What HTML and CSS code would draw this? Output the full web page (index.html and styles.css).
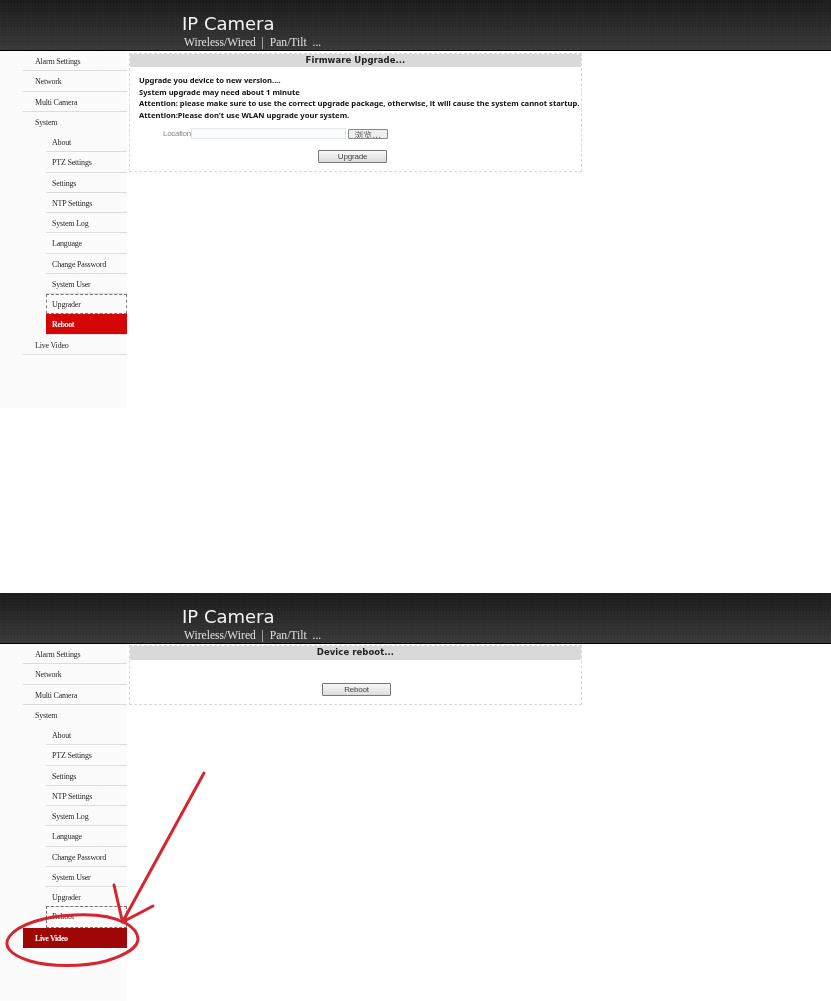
FILE: index.html
```html
<!DOCTYPE html>
<html lang="en">
<head>
<meta charset="utf-8">
<title>IP Camera</title>
<link rel="stylesheet" href="styles.css">
</head>
<body>
<section class="screen screen-first">
  <header class="top">
    <div class="brand">IP Camera</div>
    <div class="tag">Wireless/Wired&nbsp; |&nbsp; Pan/Tilt&nbsp; ...</div>
  </header>
  <div class="content">
    <nav class="side">
      <a class="item">Alarm Settings</a>
      <a class="item">Network</a>
      <a class="item">Multi Camera</a>
      <a class="item plain">System</a>
      <div class="sub">
        <a class="item">About</a>
        <a class="item">PTZ Settings</a>
        <a class="item">Settings</a>
        <a class="item">NTP Settings</a>
        <a class="item">System Log</a>
        <a class="item">Language</a>
        <a class="item">Change Password</a>
        <a class="item">System User</a>
        <a class="item focus">Upgrader</a>
        <a class="item active">Reboot</a>
      </div>
      <a class="item">Live Video</a>
    </nav>
    <main class="panel panel-upgrade">
      <h2 class="panel-title">Firmware Upgrade...</h2>
      <div class="notes">
        <p>Upgrade you device to new version....</p>
        <p>System upgrade may need about 1 minute</p>
        <p>Attention: please make sure to use the correct upgrade package, otherwise, it will cause the system cannot startup.</p>
        <p>Attention:Please don't use WLAN upgrade your system.</p>
      </div>
      <div class="file-row">
        <span class="file-label">Location</span>
        <span class="file-input"></span>
        <button class="browse">浏览...</button>
      </div>
      <div class="actions actions-upgrade"><button class="btn">Upgrade</button></div>
    </main>
  </div>
</section>
<section class="screen screen-second">
  <header class="top">
    <div class="brand">IP Camera</div>
    <div class="tag">Wireless/Wired&nbsp; |&nbsp; Pan/Tilt&nbsp; ...</div>
  </header>
  <div class="content">
    <nav class="side">
      <a class="item">Alarm Settings</a>
      <a class="item">Network</a>
      <a class="item">Multi Camera</a>
      <a class="item plain">System</a>
      <div class="sub">
        <a class="item">About</a>
        <a class="item">PTZ Settings</a>
        <a class="item">Settings</a>
        <a class="item">NTP Settings</a>
        <a class="item">System Log</a>
        <a class="item">Language</a>
        <a class="item">Change Password</a>
        <a class="item">System User</a>
        <a class="item">Upgrader</a>
        <a class="item focus">Reboot</a>
      </div>
      <a class="item live">Live Video</a>
    </nav>
    <main class="panel panel-reboot">
      <h2 class="panel-title">Device reboot...</h2>
      <div class="actions actions-reboot"><button class="btn btn-reboot">Reboot</button></div>
    </main>
  </div>
  <svg class="markup" viewBox="0 0 220 408" width="220" height="408" aria-hidden="true">
    <path d="M204 180 L122.5 329 M114 292 L122.5 329 L153 313"/>
    <path d="M125 330 C112 323 92 321 74 322 C46 323 18 331 9 344 C3 353 10 362 30 368 C50 374 84 374 106 368 C126 362 138 354 138 346 C138 339 131 333 124 329"/>
  </svg>
</section>
</body>
</html>
```

FILE: styles.css
```css
html, body { margin: 0; padding: 0; background: #fff; }
body { font-family: "Liberation Serif", serif; width: 831px; overflow: hidden; }

.screen { position: relative; display: flex; flex-direction: column; filter: blur(0.3px); }
.screen-first { height: 593px; }
.screen-second { height: 408px; }

.top {
  box-sizing: border-box;
  height: 51px;
  flex: none;
  padding: 13px 0 0 182px;
  background:
    radial-gradient(circle at 1px 1px, rgba(255,255,255,.018) 0 1px, transparent 1px) 0 0 / 3px 3px,
    linear-gradient(#1b1b1b, #383838);
  border-bottom: 1px solid #000;
  color: #fff;
}
.brand { font: 18px/22px "DejaVu Sans", sans-serif; color: #f4f4f4; }
.tag { font: 11.6px/14px "Liberation Serif", serif; color: #e0e0e0; padding: 1px 0 0 2px; white-space: nowrap; }

.content { display: flex; align-items: flex-start; }

.side {
  box-sizing: border-box;
  flex: none;
  width: 127px;
  height: 357px;
  padding-left: 23px;
  background:
    radial-gradient(circle at 1px 1px, rgba(0,0,0,.007) 0 1px, transparent 1px) 0 0 / 3px 3px,
    #fcfcfc;
}
.item {
  box-sizing: border-box;
  display: block;
  height: 20.25px;
  padding: 6px 0 0 12px;
  font-size: 8px;
  letter-spacing: -0.2px;
  line-height: 10px;
  color: #2a2a2a;
  border-bottom: 1px solid #ddd;
  white-space: nowrap;
}
.item.plain { border-bottom: 0; }
.sub { padding-left: 23px; }
.sub .item { padding-left: 6px; }
.item.focus { border: 1px dashed #777; padding-left: 5px; padding-top: 5px; }
.screen-second .item.focus { margin-top: -1px; height: 21.25px; }
.item.active { background: #d40606; color: #fff; font-weight: bold; letter-spacing: -0.4px; border-bottom: 1px solid #ddd; }
.item.live { background: #a00808; color: #fff; font-weight: bold; letter-spacing: -0.4px; border-bottom: 0; }

.panel {
  box-sizing: border-box;
  flex: none;
  width: 453px;
  margin: 2px 0 0 2px;
  border: 1px dashed #d8d8d8;
  background: #fff;
}
.panel-upgrade { height: 119px; }
.panel-reboot { height: 60px; margin-top: 1px; }
.panel-title {
  margin: 0;
  height: 13px;
  background: #d9d9d9;
  text-align: center;
  font: bold 8.5px/13px "DejaVu Sans", sans-serif;
  letter-spacing: 0.05px;
  color: #222;
}
.panel-reboot .panel-title { height: 14px; }
.notes { padding: 8px 0 0 9px; }
.notes p {
  margin: 0;
  font: bold 7.63px/11.6px "Noto Sans", sans-serif;
  color: #111;
  white-space: nowrap;
}
.file-row { display: flex; align-items: center; padding: 7px 0 0 33px; }
.file-label { width: 28px; font: 8px/11px "Liberation Sans", sans-serif; letter-spacing: -0.3px; color: #888; }
.file-input { box-sizing: border-box; width: 155px; height: 11px; background: #fafbfc; border: 1px solid #e4e8ee; }
.browse {
  box-sizing: border-box;
  width: 40px;
  height: 10px;
  margin: 0 0 0 2px;
  padding: 0 0 5px;
  font: 8.5px/8px "Noto Sans CJK SC", sans-serif;
  letter-spacing: 0.6px;
  color: #555;
  background: #eee;
  border: 1px solid #888;
  border-radius: 1px;
  overflow: hidden;
}
.actions { display: flex; }
.actions-upgrade { padding: 11px 0 0 188px; }
.actions-reboot { padding: 23px 0 0 192px; }
.btn {
  box-sizing: border-box;
  width: 69px;
  height: 13px;
  margin: 0;
  padding: 0;
  font: 8px/11px "Liberation Sans", sans-serif;
  letter-spacing: -0.2px;
  color: #444;
  background: linear-gradient(#f8f8f8, #dcdcdc);
  border: 1px solid #777;
  border-radius: 1px;
}

.markup { position: absolute; left: 0; top: 0; overflow: visible; }
.markup path { fill: none; stroke: #d6252f; stroke-width: 3; stroke-linecap: round; stroke-linejoin: round; }
```
